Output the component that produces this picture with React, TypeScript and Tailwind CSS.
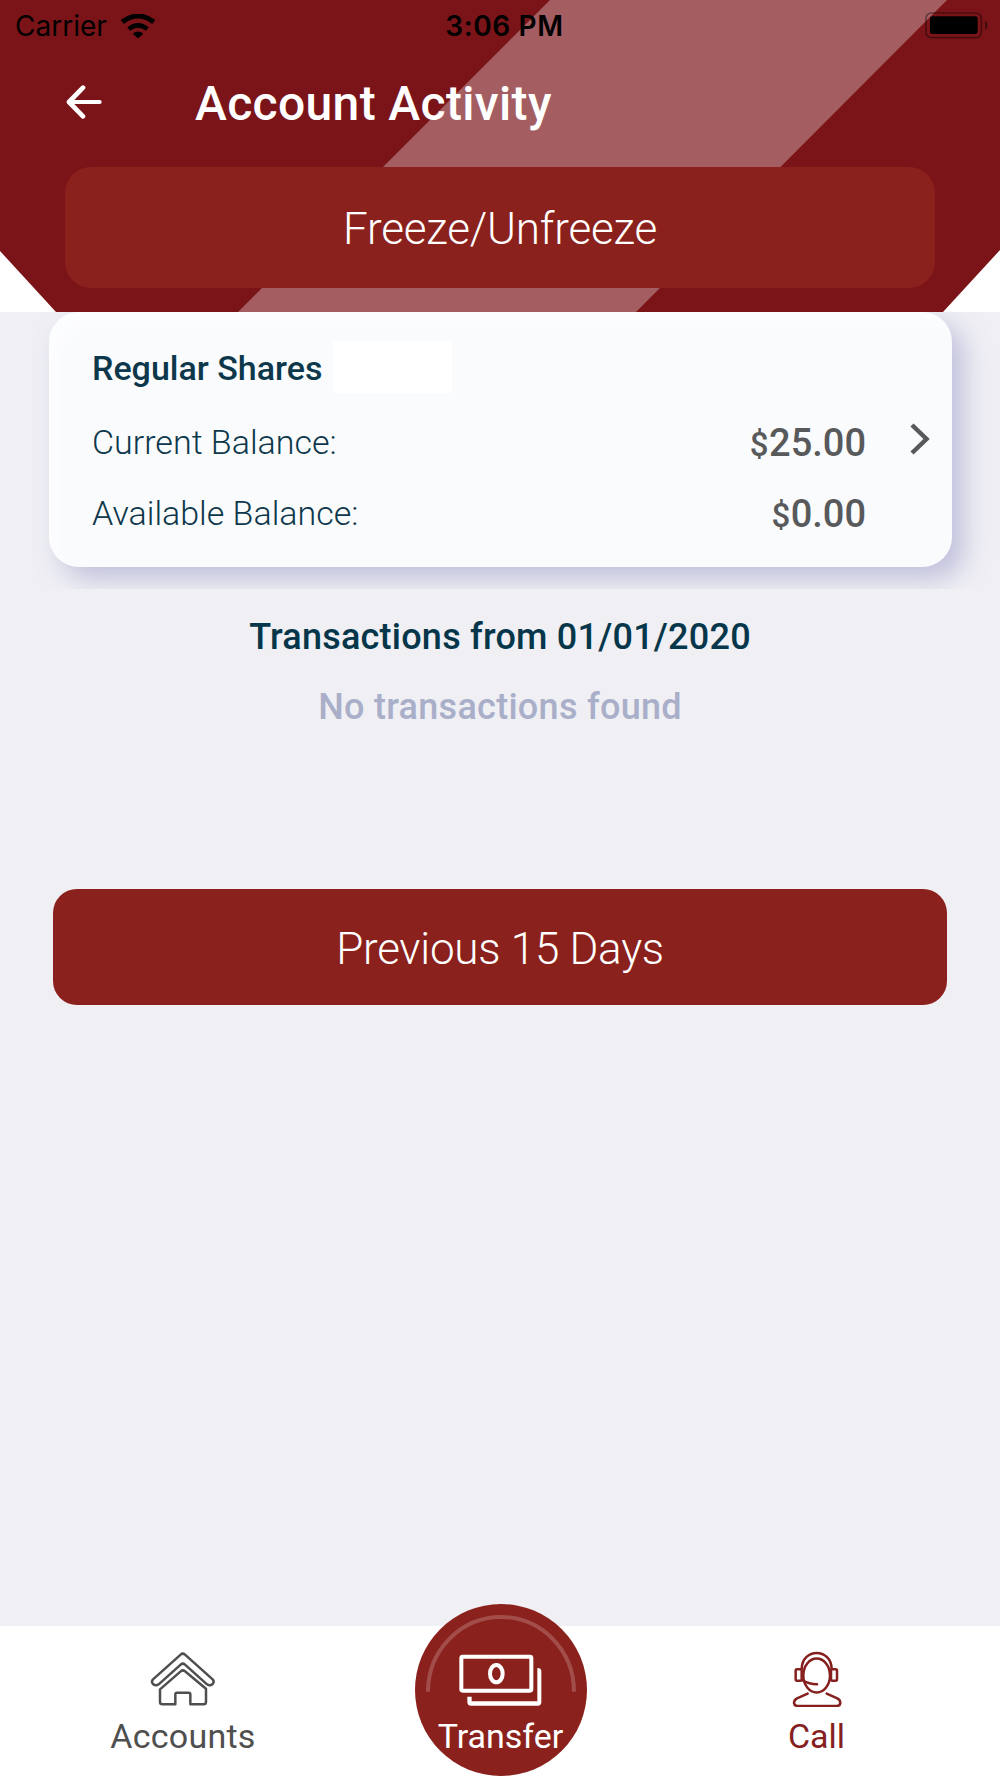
import React from 'react';

const WifiIcon = () => (
  <svg className="w-[34px] h-6" viewBox="363 36 102 72" fill="none" stroke="#000">
    <path d="M367 60 Q414 24 461 60" strokeWidth="15" />
    <path d="M386 81 Q414 59 442 81" strokeWidth="14" />
    <path d="M398 95 Q414 82 430 95 L414 109 Z" fill="#000" stroke="none" />
  </svg>
);

const BatteryIcon = () => (
  <svg className="w-[63px] h-[27px]" viewBox="1275 33 189 81">
    <rect x="1278" y="36" width="166" height="74" rx="16" fill="none" stroke="#000" strokeOpacity="0.4" strokeWidth="5" />
    <rect x="1290" y="46" width="143" height="53" rx="7" fill="#000" />
    <path d="M1455 58 Q1463 64 1463 73 Q1463 82 1455 88 Z" fill="#000" fillOpacity="0.45" />
  </svg>
);

const BackIcon = () => (
  <svg className="w-9 h-[34px]" viewBox="197 254 108 102" fill="none" stroke="#fff" strokeLinecap="round" strokeLinejoin="round">
    <path d="M248 262 L206 305 L248 348" strokeWidth="14" />
    <path d="M207 305 H298" strokeWidth="12" />
  </svg>
);

const HomeIcon = () => (
  <svg className="w-[66px] h-14" viewBox="150 93 198 168" fill="none" stroke="#4f4f4f" strokeWidth="7.500" strokeLinejoin="round">
    <path d="M242 104 Q248.500 98 255 104 L338 178 Q344 185 338 192 Q330 199 321 193 L255 134 Q248.500 128 242 134 L176 193 Q167 199 159 192 Q153 185 159 178 Z" />
    <path d="M180 208 L242 154 Q248.500 148 255 154 L318 206 V246 Q318 253 311 253 H271 V223 Q271 218 266 218 H231 Q226 218 226 223 V253 H187 Q180 253 180 246 Z" />
  </svg>
);

const MoneyIcon = () => (
  <svg className="w-[172px] h-[172px]" viewBox="44 42 516 516" fill="none" stroke="#fff" strokeLinejoin="round">
    <path d="M83 305 A219 224 0 0 1 521 305" strokeWidth="12" strokeOpacity="0.2" />
    <rect x="183" y="200" width="210" height="102" rx="4" strokeWidth="12" />
    <ellipse cx="288" cy="251" rx="19" ry="26" strokeWidth="12" />
    <path d="M411 234 Q423 234 423 244 V336 Q423 347 412 347 H212 Q201 347 201 336 V320 H214 V334 H411 Z" fill="#fff" stroke="none" />
  </svg>
);

const CallIcon = () => (
  <svg className="w-[50px] h-14" viewBox="154 94 150 168" fill="none" stroke="#85201f" strokeWidth="7.500" strokeLinecap="round" strokeLinejoin="round">
    <ellipse cx="228" cy="167.500" rx="40" ry="51" />
    <path d="M183 147 C185 84 271 84 273 147" />
    <rect x="165" y="149" width="18" height="34" rx="4" />
    <rect x="271" y="149" width="18" height="34" rx="4" />
    <path d="M187 183 Q205 193 229 194" />
    <path d="M201 222 L169 236 Q160 240 160 250 Q161 259 171 259 H288 Q298 259 299 250 Q299 240 290 236 L258 222" />
  </svg>
);

const balances = [
  { label: 'Current Balance:', amount: '25.00' },
  { label: 'Available Balance:', amount: '0.00' },
];

const App = () => {
  return (
    <div className="w-[1000px] h-[1778px] flex flex-col overflow-hidden bg-[#efeff4] font-[Roboto,sans-serif]">
      {/* Header */}
      <header className="relative h-[312px] shrink-0 bg-white">
        <svg className="absolute inset-0 w-full h-full" viewBox="0 0 1000 312">
          <path d="M0 0 H1000 V250 L943 312 H56 L0 251 Z" fill="#7b1418" />
          <path d="M550 0 H947 L636 312 H238 Z" fill="#a45e62" />
        </svg>
        <div className="relative flex flex-col">
          <div className="h-[51px] grid grid-cols-[1fr_auto_1fr] items-center pl-[15px] pr-3 text-[28px] text-black font-[Inter,sans-serif]">
            <div className="flex items-center gap-[14px]">
              <span>Carrier</span>
              <WifiIcon />
            </div>
            <span className="pl-[6px] font-semibold tracking-[0.6px]">3:06 PM</span>
            <div className="flex justify-end">
              <BatteryIcon />
            </div>
          </div>
          <div className="h-[105px] flex items-center pl-[66px] text-white">
            <button className="mb-1">
              <BackIcon />
            </button>
            <h1 className="ml-[93px] text-[48px] font-medium tracking-[0.35px] whitespace-nowrap">Account Activity</h1>
          </div>
          <button className="mt-[11px] mx-[65px] h-[121px] pt-[3px] rounded-[26px] bg-[#8b211c] text-white text-[44px] font-light tracking-[-0.18px]">
            Freeze/Unfreeze
          </button>
        </div>
      </header>

      {/* Account card */}
      <section className="h-[277px] shrink-0 overflow-hidden px-[48.5px]">
        <div className="h-[255px] w-[903px] flex rounded-[30px] bg-[#fafbfd] shadow-[12px_12px_24px_rgba(150,150,200,0.5),inset_10px_12px_16px_rgba(255,255,255,0.5)]">
          <div className="flex-1 pl-[43.5px]">
            <div className="mt-[29px] h-[52px] flex items-center text-[#0d384b]">
              <h2 className="w-[241px] pt-[3px] text-[34px] font-medium whitespace-nowrap">Regular Shares</h2>
              <span className="w-[119px] h-[52px] bg-white"></span>
            </div>
            <div className="mt-[14px]">
              {balances.map((row) => (
                <div key={row.label} className="h-[71px] flex items-center justify-between">
                  <span className="text-[34px] font-light text-[#0d384b]">{row.label}</span>
                  <span className="pt-px text-[38px] font-medium text-[#58595b]">
                    <span className="text-[33px] tracking-[0.5px]">$</span>
                    {row.amount}
                  </span>
                </div>
              ))}
            </div>
          </div>
          <svg className="w-5 h-8 ml-[44px] mr-[21.5px] mt-[111px]" viewBox="0 0 20 32" fill="none" stroke="#58595b" strokeWidth="4.500">
            <path d="M2 2 L16.500 16 L2 30" />
          </svg>
        </div>
      </section>

      {/* Transactions */}
      <main className="flex-1 flex flex-col pt-3 text-[36px] font-medium text-center">
        <h3 className="h-[70px] leading-[72px] tracking-[0.22px] text-[#06364a]">Transactions from 01/01/2020</h3>
        <p className="h-[70px] leading-[72px] tracking-[0.28px] text-[#a9afc9]">No transactions found</p>
        <button className="mt-[148px] mx-[53px] h-[116px] pt-1 rounded-[24px] bg-[#8b211c] text-white text-[44px] font-light tracking-[-0.25px]">
          Previous 15 Days
        </button>
      </main>

      {/* Bottom navigation */}
      <nav className="h-[152px] shrink-0 grid grid-cols-[366px_268px_366px] bg-white text-[34px] text-[#4f4f4f]">
        <a className="flex flex-col items-center pt-[25px]">
          <HomeIcon />
          <span className="mt-[5px] leading-[48px] tracking-[0.25px]">Accounts</span>
        </a>
        <a className="-mt-[22px] w-[172px] h-[172px] ml-[48.5px] flex flex-col items-center rounded-full bg-[#8b211c] text-white">
          <MoneyIcon />
          <span className="-mt-[64px] leading-[48px]">Transfer</span>
        </a>
        <a className="flex flex-col items-center pt-[25px] pr-px text-[#85201f]">
          <CallIcon />
          <span className="mt-[5px] leading-[48px]">Call</span>
        </a>
      </nav>
    </div>
  );
};

export default App;
